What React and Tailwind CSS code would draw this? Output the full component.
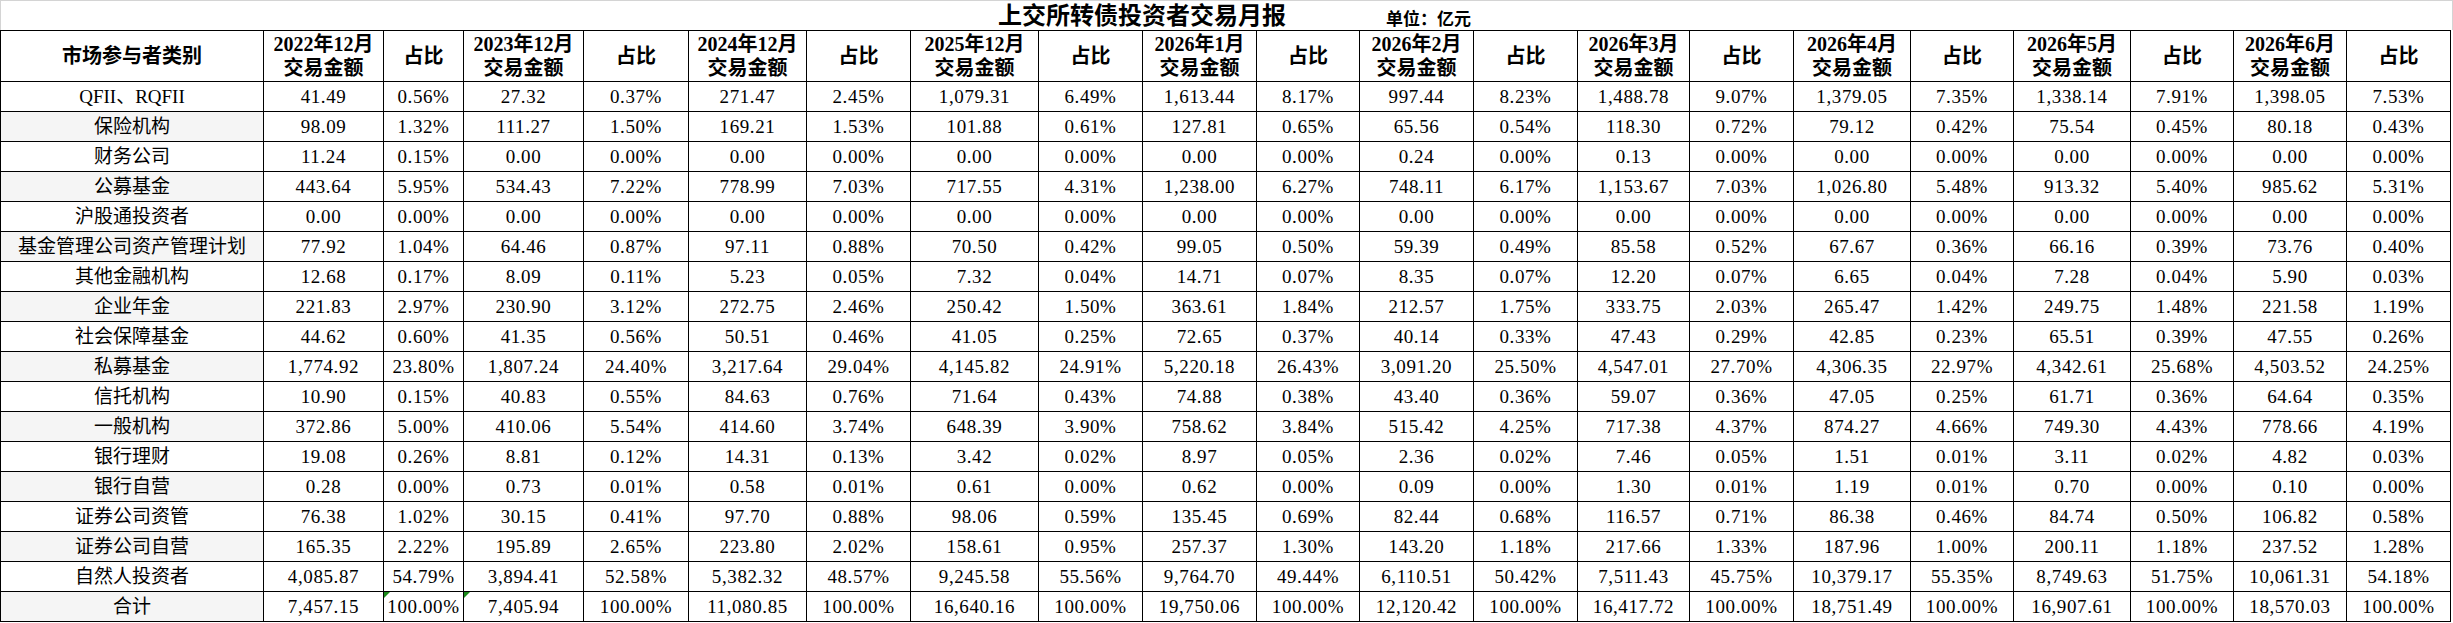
import React from "react";

const headers = [
  "2022年12月",
  "2023年12月",
  "2024年12月",
  "2025年12月",
  "2026年1月",
  "2026年2月",
  "2026年3月",
  "2026年4月",
  "2026年5月",
  "2026年6月",
];

const rows = [
  ["QFII、RQFII", "41.49", "0.56%", "27.32", "0.37%", "271.47", "2.45%", "1,079.31", "6.49%", "1,613.44", "8.17%", "997.44", "8.23%", "1,488.78", "9.07%", "1,379.05", "7.35%", "1,338.14", "7.91%", "1,398.05", "7.53%"],
  ["保险机构", "98.09", "1.32%", "111.27", "1.50%", "169.21", "1.53%", "101.88", "0.61%", "127.81", "0.65%", "65.56", "0.54%", "118.30", "0.72%", "79.12", "0.42%", "75.54", "0.45%", "80.18", "0.43%"],
  ["财务公司", "11.24", "0.15%", "0.00", "0.00%", "0.00", "0.00%", "0.00", "0.00%", "0.00", "0.00%", "0.24", "0.00%", "0.13", "0.00%", "0.00", "0.00%", "0.00", "0.00%", "0.00", "0.00%"],
  ["公募基金", "443.64", "5.95%", "534.43", "7.22%", "778.99", "7.03%", "717.55", "4.31%", "1,238.00", "6.27%", "748.11", "6.17%", "1,153.67", "7.03%", "1,026.80", "5.48%", "913.32", "5.40%", "985.62", "5.31%"],
  ["沪股通投资者", "0.00", "0.00%", "0.00", "0.00%", "0.00", "0.00%", "0.00", "0.00%", "0.00", "0.00%", "0.00", "0.00%", "0.00", "0.00%", "0.00", "0.00%", "0.00", "0.00%", "0.00", "0.00%"],
  ["基金管理公司资产管理计划", "77.92", "1.04%", "64.46", "0.87%", "97.11", "0.88%", "70.50", "0.42%", "99.05", "0.50%", "59.39", "0.49%", "85.58", "0.52%", "67.67", "0.36%", "66.16", "0.39%", "73.76", "0.40%"],
  ["其他金融机构", "12.68", "0.17%", "8.09", "0.11%", "5.23", "0.05%", "7.32", "0.04%", "14.71", "0.07%", "8.35", "0.07%", "12.20", "0.07%", "6.65", "0.04%", "7.28", "0.04%", "5.90", "0.03%"],
  ["企业年金", "221.83", "2.97%", "230.90", "3.12%", "272.75", "2.46%", "250.42", "1.50%", "363.61", "1.84%", "212.57", "1.75%", "333.75", "2.03%", "265.47", "1.42%", "249.75", "1.48%", "221.58", "1.19%"],
  ["社会保障基金", "44.62", "0.60%", "41.35", "0.56%", "50.51", "0.46%", "41.05", "0.25%", "72.65", "0.37%", "40.14", "0.33%", "47.43", "0.29%", "42.85", "0.23%", "65.51", "0.39%", "47.55", "0.26%"],
  ["私募基金", "1,774.92", "23.80%", "1,807.24", "24.40%", "3,217.64", "29.04%", "4,145.82", "24.91%", "5,220.18", "26.43%", "3,091.20", "25.50%", "4,547.01", "27.70%", "4,306.35", "22.97%", "4,342.61", "25.68%", "4,503.52", "24.25%"],
  ["信托机构", "10.90", "0.15%", "40.83", "0.55%", "84.63", "0.76%", "71.64", "0.43%", "74.88", "0.38%", "43.40", "0.36%", "59.07", "0.36%", "47.05", "0.25%", "61.71", "0.36%", "64.64", "0.35%"],
  ["一般机构", "372.86", "5.00%", "410.06", "5.54%", "414.60", "3.74%", "648.39", "3.90%", "758.62", "3.84%", "515.42", "4.25%", "717.38", "4.37%", "874.27", "4.66%", "749.30", "4.43%", "778.66", "4.19%"],
  ["银行理财", "19.08", "0.26%", "8.81", "0.12%", "14.31", "0.13%", "3.42", "0.02%", "8.97", "0.05%", "2.36", "0.02%", "7.46", "0.05%", "1.51", "0.01%", "3.11", "0.02%", "4.82", "0.03%"],
  ["银行自营", "0.28", "0.00%", "0.73", "0.01%", "0.58", "0.01%", "0.61", "0.00%", "0.62", "0.00%", "0.09", "0.00%", "1.30", "0.01%", "1.19", "0.01%", "0.70", "0.00%", "0.10", "0.00%"],
  ["证券公司资管", "76.38", "1.02%", "30.15", "0.41%", "97.70", "0.88%", "98.06", "0.59%", "135.45", "0.69%", "82.44", "0.68%", "116.57", "0.71%", "86.38", "0.46%", "84.74", "0.50%", "106.82", "0.58%"],
  ["证券公司自营", "165.35", "2.22%", "195.89", "2.65%", "223.80", "2.02%", "158.61", "0.95%", "257.37", "1.30%", "143.20", "1.18%", "217.66", "1.33%", "187.96", "1.00%", "200.11", "1.18%", "237.52", "1.28%"],
  ["自然人投资者", "4,085.87", "54.79%", "3,894.41", "52.58%", "5,382.32", "48.57%", "9,245.58", "55.56%", "9,764.70", "49.44%", "6,110.51", "50.42%", "7,511.43", "45.75%", "10,379.17", "55.35%", "8,749.63", "51.75%", "10,061.31", "54.18%"],
  ["合计", "7,457.15", "100.00%", "7,405.94", "100.00%", "11,080.85", "100.00%", "16,640.16", "100.00%", "19,750.06", "100.00%", "12,120.42", "100.00%", "16,417.72", "100.00%", "18,751.49", "100.00%", "16,907.61", "100.00%", "18,570.03", "100.00%"],
];

const cell =
  "relative flex items-center justify-center border-r border-b border-black whitespace-nowrap";

function Triangle() {
  return (
    <span className="absolute left-0 top-0 h-0 w-0 border-t-[6px] border-r-[6px] border-t-[#1a8a1a] border-r-transparent" />
  );
}

export default function App() {
  return (
    <div className="w-[2453px] h-[623px] bg-white text-black font-['Liberation_Serif','Noto_Sans_CJK_SC',serif] overflow-hidden">
      <div className="flex h-[30px] items-end border-t border-l border-r border-[#d4d4d4] pl-[997px]">
        <span className="text-[24px] leading-[28px] font-bold">上交所转债投资者交易月报</span>
        <span className="ml-[100px] text-[17px] leading-[21px] font-bold">单位：亿元</span>
      </div>
      <div className="grid w-[2451px] grid-cols-[263px_120px_80px_120px_105px_118px_104px_128px_104px_114px_103px_114px_104px_112px_104px_117px_103px_117px_103px_113px_104px] border-l border-t border-black">
        <div className={`${cell} h-[51px] text-[20px] font-bold`}>市场参与者类别</div>
        {headers.map((h) => (
          <React.Fragment key={h}>
            <div className={`${cell} h-[51px] flex-col text-[20px] leading-[24px] font-bold`}>
              <span>{h}</span>
              <span>交易金额</span>
            </div>
            <div className={`${cell} h-[51px] text-[20px] font-bold`}>占比</div>
          </React.Fragment>
        ))}
        {rows.map((r, ri) => (
          <React.Fragment key={r[0]}>
            {r.map((v, ci) => (
              <div
                key={ci}
                className={`${cell} h-[30px] text-[19px] leading-[22px] ${
                  ci === 0
                    ? ri % 2 === 1
                      ? "bg-[#f5f5f5]"
                      : "bg-white"
                    : "tracking-[0.6px]"
                }`}
              >
                {ri === rows.length - 1 && (ci === 2 || ci === 3) && <Triangle />}
                {v}
              </div>
            ))}
          </React.Fragment>
        ))}
      </div>
    </div>
  );
}
